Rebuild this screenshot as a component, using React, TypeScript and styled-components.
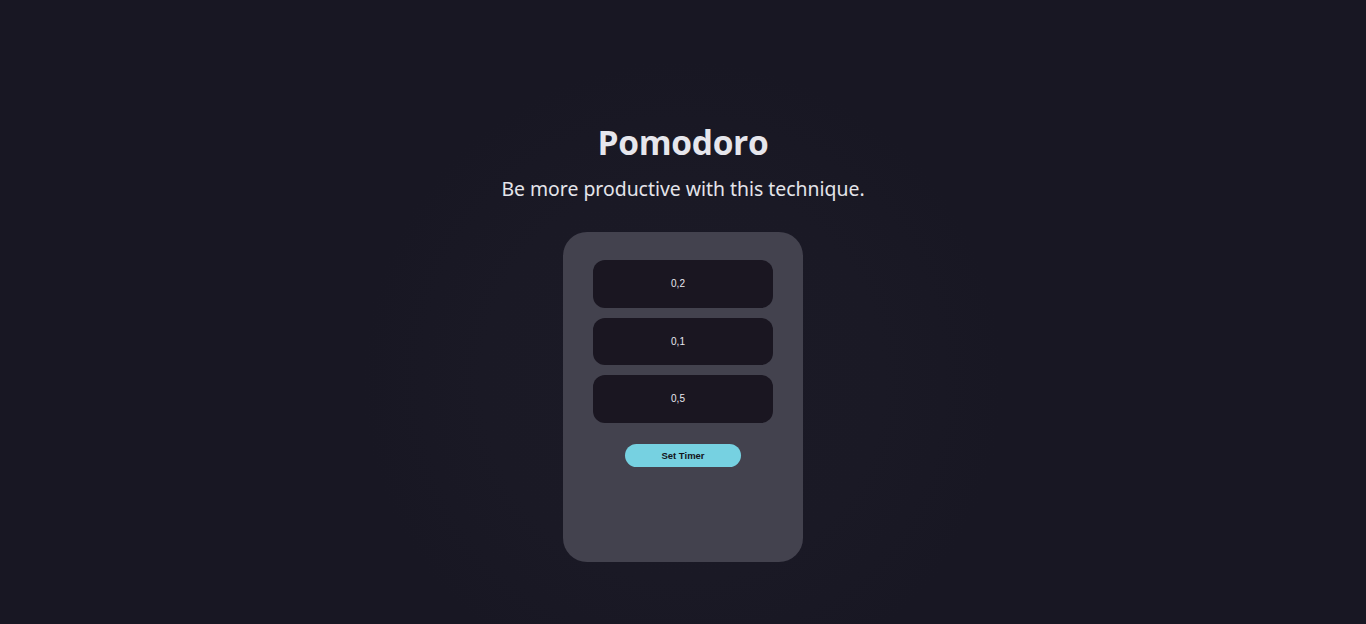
import React from "react";
import styled, { createGlobalStyle } from "styled-components";

const Global = createGlobalStyle`
  html, body { margin: 0; padding: 0; }
  body {
    background: #181723;
    font-family: "Open Sans", "Noto Sans", sans-serif;
    color: #e4e4ea;
  }
`;

const Page = styled.main`
  min-height: 624px;
  display: flex;
  flex-direction: column;
  align-items: center;
  padding-top: 118px;
  box-sizing: border-box;
  background: radial-gradient(circle at 683px 380px, #1b1a26 0px, #1a1925 200px, #181723 320px);
`;

const Title = styled.h1`
  margin: 0;
  font-family: "Open Sans", sans-serif;
  font-weight: 700;
  font-size: 33.5px;
  line-height: 48px;
  letter-spacing: -0.3px;
  color: #e6e6ec;
`;

const Subtitle = styled.p`
  margin: 9px 0 0;
  font-family: "Noto Sans", sans-serif;
  font-size: 19.4px;
  line-height: 28px;
  color: #e4e4ea;
`;

const Card = styled.section`
  margin-top: 29px;
  width: 240px;
  height: 330px;
  box-sizing: border-box;
  background: #43424e;
  border-radius: 24px;
  padding: 28px 30px;
  display: flex;
  flex-direction: column;
  align-items: center;
`;

const Fields = styled.div`
  display: flex;
  flex-direction: column;
  gap: 10px;
  width: 100%;
`;

const Field = styled.input`
  width: 100%;
  height: 47.5px;
  box-sizing: border-box;
  border: none;
  outline: none;
  border-radius: 12px;
  background: #1a1621;
  color: #e8e8f0;
  text-align: center;
  padding: 0 10px 0 0;
  font-family: "Liberation Sans", Arial, sans-serif;
  font-size: 10px;
`;

const Button = styled.button`
  margin-top: 21px;
  width: 116px;
  height: 23px;
  border: none;
  border-radius: 12px;
  background: #76d1e1;
  color: #14141c;
  font-family: "Liberation Sans", Arial, sans-serif;
  font-size: 9.5px;
  font-weight: 700;
  cursor: pointer;
`;

export default function App() {
  return (
    <>
      <Global />
      <Page>
        <Title>Pomodoro</Title>
        <Subtitle>Be more productive with this technique.</Subtitle>
        <Card>
          <Fields>
            <Field defaultValue="0,2" />
            <Field defaultValue="0,1" />
            <Field defaultValue="0,5" />
          </Fields>
          <Button>Set Timer</Button>
        </Card>
      </Page>
    </>
  );
}
